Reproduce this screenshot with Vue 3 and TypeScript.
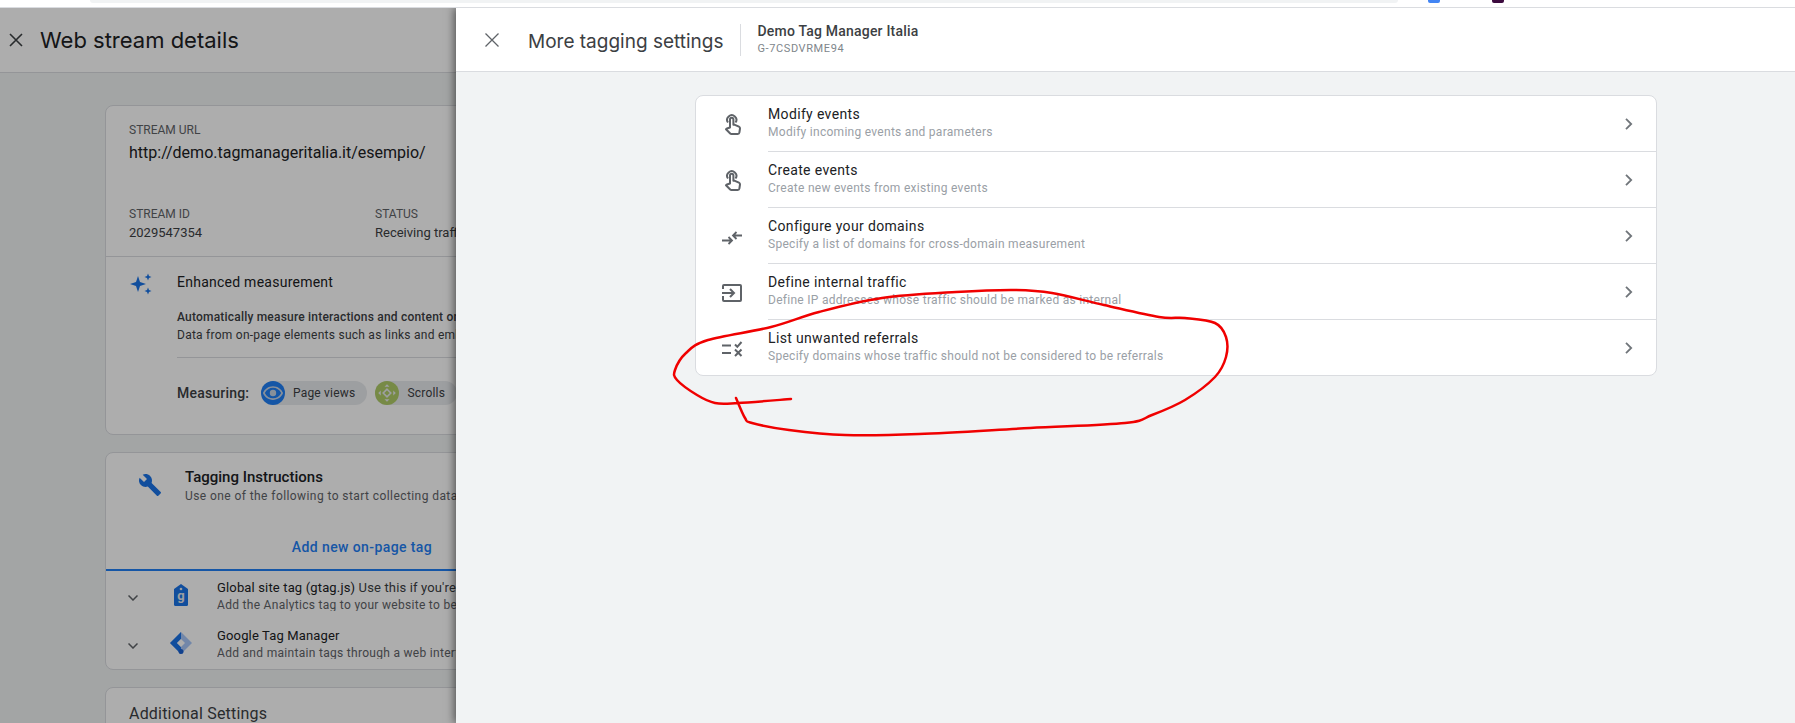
<script setup lang="ts">
type RowIcon = 'touch' | 'compare' | 'input' | 'rule'

const settings: { title: string; sub: string; icon: RowIcon }[] = [
  { title: 'Modify events', sub: 'Modify incoming events and parameters', icon: 'touch' },
  { title: 'Create events', sub: 'Create new events from existing events', icon: 'touch' },
  { title: 'Configure your domains', sub: 'Specify a list of domains for cross-domain measurement', icon: 'compare' },
  { title: 'Define internal traffic', sub: 'Define IP addresses whose traffic should be marked as internal', icon: 'input' },
  { title: 'List unwanted referrals', sub: 'Specify domains whose traffic should not be considered to be referrals', icon: 'rule' },
]

// hand-drawn circle, traced from the screenshot
const scribble: [number, number][] = [
  [791, 399], [738, 403], [715, 403], [697, 395], [677, 380], [675, 370], [686, 353], [708, 340],
  [771, 327], [819, 312], [882, 298], [956, 292], [1015, 290], [1052, 293], [1104, 305], [1159, 317],
  [1185, 318], [1215, 323], [1226, 337], [1226, 357], [1215, 377], [1185, 400], [1152, 415], [1125, 423],
  [1030, 428], [919, 434], [845, 435], [789, 430], [752, 423], [745, 418], [736, 398],
]

function smooth(pts: [number, number][]): string {
  let d = `M${pts[0][0]} ${pts[0][1]}`
  for (let i = 0; i < pts.length - 1; i++) {
    const p0 = pts[Math.max(i - 1, 0)]
    const p1 = pts[i]
    const p2 = pts[i + 1]
    const p3 = pts[Math.min(i + 2, pts.length - 1)]
    const c1x = p1[0] + (p2[0] - p0[0]) / 6
    const c1y = p1[1] + (p2[1] - p0[1]) / 6
    const c2x = p2[0] - (p3[0] - p1[0]) / 6
    const c2y = p2[1] - (p3[1] - p1[1]) / 6
    d += ` C${c1x} ${c1y} ${c2x} ${c2y} ${p2[0]} ${p2[1]}`
  }
  return d
}

const scribblePath = smooth(scribble)
</script>

<template>
  <div class="screen">
    <div class="browser-strip">
      <div class="omnibox"></div>
      <span class="fav fav-blue"></span>
      <span class="fav fav-purple"></span>
    </div>

    <div class="workspace">
      <section class="page">
        <header class="page-head">
          <svg class="close" viewBox="0 0 14 14" width="14" height="14">
            <path d="M1 1l12 12M13 1L1 13" stroke="#3c4043" stroke-width="1.6" fill="none" />
          </svg>
          <h1>Web stream details</h1>
        </header>

        <div class="card stream-card">
          <div class="stream-top">
            <div class="label">STREAM URL</div>
            <div class="url">http://demo.tagmanageritalia.it/esempio/</div>
            <div class="meta">
              <div>
                <div class="label">STREAM ID</div>
                <div class="value">2029547354</div>
              </div>
              <div>
                <div class="label">STATUS</div>
                <div class="value">Receiving traffic</div>
              </div>
            </div>
          </div>
          <div class="enhanced">
            <svg class="sparkle" viewBox="0 0 24 24" width="24" height="24">
              <path fill="#1a73e8" d="M9 4l2 6 6 2-6 2-2 6-2-6-6-2 6-2zM19 1.500l1 2.500 2.500 1-2.500 1-1 2.500-1-2.500-2.500-1 2.500-1zM19 15.500l1 2.500 2.500 1-2.500 1-1 2.500-1-2.500-2.500-1 2.500-1z" />
            </svg>
            <div class="enhanced-body">
              <div class="enhanced-title">Enhanced measurement</div>
              <p class="strong">Automatically measure interactions and content on your</p>
              <p>Data from on-page elements such as links and embedded</p>
              <div class="measuring">
                <span class="measuring-label">Measuring:</span>
                <span class="chip">
                  <span class="chip-icon blue">
                    <svg viewBox="0 0 24 24" width="22" height="22">
                      <path fill="#c8d4e4" fill-rule="evenodd" d="M12 4.500C7 4.500 2.730 7.610 1 12c1.730 4.390 6 7.500 11 7.500s9.270-3.110 11-7.500c-1.730-4.390-6-7.500-11-7.500zM12 17.800c-3.800 0-7.200-2.200-8.900-5.800C4.800 8.400 8.200 6.200 12 6.200s7.200 2.200 8.900 5.800c-1.700 3.600-5.100 5.800-8.900 5.800zM12 8.500a3.500 3.500 0 1 0 0 7 3.500 3.500 0 0 0 0-7z" />
                    </svg>
                  </span>
                  Page views
                </span>
                <span class="chip">
                  <span class="chip-icon green">
                    <svg viewBox="0 0 24 24" width="20" height="20">
                      <path fill="none" stroke="#e8eaed" stroke-width="2" d="M12 7.500l4.500 4.500-4.500 4.500L7.500 12z" />
                      <path fill="#e8eaed" d="M12 1.500l3 3H9zM12 22.500l-3-3h6zM1.500 12l3-3v6zM22.500 12l-3 3V9z" />
                    </svg>
                  </span>
                  Scrolls
                </span>
              </div>
            </div>
          </div>
        </div>

        <div class="card tagging-card">
          <div class="tagging-head">
            <svg viewBox="0 0 24 24" width="24" height="24">
              <path fill="#1a73e8" d="M22.700 19l-9.100-9.100c.9-2.300.4-5-1.500-6.900-2-2-5-2.400-7.400-1.300L9 6 6 9 1.600 4.700C.4 7.100.9 10.100 2.900 12.100c1.900 1.900 4.600 2.400 6.900 1.500l9.100 9.100c.4.4 1 .4 1.400 0l2.300-2.300c.5-.4.5-1.100.1-1.400z" />
            </svg>
            <div>
              <div class="tagging-title">Tagging Instructions</div>
              <div class="tagging-sub">Use one of the following to start collecting data</div>
            </div>
          </div>
          <div class="tab">Add new on-page tag</div>
          <div class="tag-row">
            <svg class="caret" viewBox="0 0 10 6" width="10" height="6">
              <path d="M.5.500L5 5 9.500.500" fill="none" stroke="#5f6368" stroke-width="1.500" />
            </svg>
            <span class="tag-icon">
              <svg viewBox="0 0 16 22" width="16" height="22">
                <path fill="#1a73e8" d="M8 0l7 5v15.500a1.500 1.500 0 0 1-1.500 1.500h-11A1.500 1.500 0 0 1 1 20.500V5z" />
                <circle cx="8" cy="5" r="1.300" fill="#e8eaed" />
                <text x="8" y="16" text-anchor="middle" class="tag-g">g</text>
              </svg>
            </span>
            <div class="tag-text">
              <div class="tag-title">Global site tag (gtag.js) <span>Use this if you're</span></div>
              <div class="tag-sub">Add the Analytics tag to your website to begin</div>
            </div>
          </div>
          <div class="tag-row">
            <svg class="caret" viewBox="0 0 10 6" width="10" height="6">
              <path d="M.5.500L5 5 9.500.500" fill="none" stroke="#5f6368" stroke-width="1.500" />
            </svg>
            <span class="tag-icon">
              <svg viewBox="0 0 24 24" width="24" height="24">
                <path fill="#a8c7fa" d="M12 1l11 11-11 11L1 12z" />
                <path fill="#1a73e8" d="M12 1L1 12l11 11v-7l-4-4 4-4z" />
                <path fill="#fff" d="M12 8l4 4-4 4-4-4z" />
                <circle cx="12" cy="20.500" r="2.500" fill="#1a60d0" />
              </svg>
            </span>
            <div class="tag-text">
              <div class="tag-title">Google Tag Manager</div>
              <div class="tag-sub">Add and maintain tags through a web interface</div>
            </div>
          </div>
        </div>

        <div class="card extra-card">Additional Settings</div>

        <div class="scrim"></div>
      </section>

      <section class="panel">
        <header class="panel-head">
          <svg class="panel-close" viewBox="0 0 14 14" width="14" height="14">
            <path d="M.5.500l13 13M13.500.500l-13 13" stroke="#5f6368" stroke-width="1.300" fill="none" />
          </svg>
          <h2>More tagging settings</h2>
          <div class="stream-name">
            <div class="stream-title">Demo Tag Manager Italia</div>
            <div class="stream-code">G-7CSDVRME94</div>
          </div>
        </header>

        <div class="settings">
          <div v-for="item in settings" :key="item.title" class="setting">
            <span class="setting-icon">
              <svg viewBox="0 0 24 24" width="24" height="24" fill="none" stroke="#5f6368" stroke-width="2">
                <template v-if="item.icon === 'touch'">
                  <path d="M8 10.500a4.600 4.600 0 1 1 7.500 0" />
                  <path stroke-linejoin="round" d="M10 15.500V7.500a1.700 1.700 0 0 1 3.400 0v5.300h1.500l4 1.900c.8.400 1.200 1 1.100 1.800l-.6 4c-.1.900-.8 1.500-1.700 1.500h-6.300c-.5 0-.9-.2-1.200-.5l-4.200-4.300.6-.6c.3-.3.7-.4 1.100-.3z" />
                </template>
                <path v-else-if="item.icon === 'compare'" stroke-width="1.800" d="M2 16.500h10M8.500 13l3.500 3.500L8.500 20M22 11.500h-9M16.500 8L13 11.500l3.500 3.500" />
                <template v-else-if="item.icon === 'input'">
                  <path d="M3 9V6a1 1 0 0 1 1-1h16a1 1 0 0 1 1 1v14a1 1 0 0 1-1 1H4a1 1 0 0 1-1-1v-4" />
                  <path d="M2 13h12M10 9l4 4-4 4" />
                </template>
                <template v-else>
                  <path d="M2 9.500h9M2 17h9" />
                  <path d="M15 8.500l2.300 2.300L21.500 6M15 13.500l6.500 6.500M21.500 13.500L15 20" />
                </template>
              </svg>
            </span>
            <div class="setting-body">
              <div class="setting-text">
                <div class="setting-title">{{ item.title }}</div>
                <div class="setting-sub">{{ item.sub }}</div>
              </div>
              <svg class="chevron" viewBox="0 0 8 12" width="8" height="12">
                <path d="M1 .8L6.200 6 1 11.200" fill="none" stroke="#70757a" stroke-width="1.800" />
              </svg>
            </div>
          </div>
        </div>
      </section>
    </div>

    <svg class="scribble" width="1795" height="723" viewBox="0 0 1795 723">
      <path :d="scribblePath" fill="none" stroke="#f00000" stroke-width="2.500" stroke-linecap="round" stroke-linejoin="round" />
    </svg>
  </div>
</template>

<style scoped>
.screen {
  position: relative;
  height: 100vh;
  display: flex;
  flex-direction: column;
  overflow: hidden;
  background: #fff;
  font-family: Roboto, "Liberation Sans", sans-serif;
  color: #202124;
}

.browser-strip {
  position: relative;
  z-index: 1;
  height: 8px;
  flex: none;
  background: #fff;
  border-bottom: 1px solid #dadce0;
  box-sizing: border-box;
}

.omnibox {
  position: absolute;
  left: 90px;
  top: 0;
  width: 1308px;
  height: 3px;
  background: #f1f3f4;
  border-radius: 0 0 12px 12px;
}

.fav {
  position: absolute;
  top: 0;
  width: 12px;
  height: 3px;
  border-radius: 0 0 2px 2px;
}

.fav-blue {
  left: 1428px;
  background: #4285f4;
}

.fav-purple {
  left: 1492px;
  background: #3c0a3e;
}

.workspace {
  flex: 1;
  display: flex;
  min-height: 0;
}

.page {
  position: relative;
  width: 456px;
  flex: none;
  overflow: hidden;
  background: #f1f3f4;
  white-space: nowrap;
}

.scrim {
  position: absolute;
  inset: 0;
  background: rgba(0, 0, 0, 0.32);
}

.page-head {
  height: 65px;
  box-sizing: border-box;
  display: flex;
  align-items: center;
  background: #fff;
  border-bottom: 1px solid #dadce0;
  padding-left: 9px;
}

.page-head h1 {
  margin: 0 0 0 17px;
  font-family: Inter, Roboto, sans-serif;
  font-size: 22px;
  font-weight: 400;
}

.card {
  width: 1000px;
  margin-left: 105px;
  box-sizing: border-box;
  background: #fff;
  border: 1px solid #dadce0;
  border-radius: 8px;
}

.stream-card {
  margin-top: 32px;
  height: 330px;
}

.stream-top {
  height: 151px;
  box-sizing: border-box;
  padding: 16px 23px 0;
  border-bottom: 1px solid #dadce0;
}

.label {
  font-size: 12px;
  line-height: 16px;
  color: #5f6368;
}

.url {
  margin-top: 3px;
  font-size: 16px;
  line-height: 24px;
  color: #202124;
}

.meta {
  display: grid;
  grid-template-columns: 246px 246px;
  margin-top: 41px;
}

.value {
  margin-top: 3px;
  font-size: 13px;
  line-height: 16px;
  color: #3c4043;
}

.enhanced {
  display: flex;
  padding: 15px 0 0 23px;
}

.sparkle {
  width: 24px;
  height: 24px;
  margin-right: 24px;
}

.enhanced-title {
  font-size: 14px;
  line-height: 20px;
  letter-spacing: 0.25px;
  color: #202124;
}

.enhanced-body p {
  margin: 0;
  font-size: 12px;
  line-height: 18px;
  letter-spacing: 0.25px;
  color: #3c4043;
}

.enhanced-body p.strong {
  margin-top: 16px;
  font-weight: 500;
  letter-spacing: 0.2px;
}

.measuring {
  display: flex;
  align-items: center;
  gap: 8px;
  margin-top: 13px;
  padding-top: 23px;
  border-top: 1px solid #dadce0;
}

.measuring-label {
  width: 72px;
  font-size: 14px;
  font-weight: 500;
  letter-spacing: 0.2px;
  color: #3c4043;
  margin-right: 4px;
}

.chip {
  display: flex;
  align-items: center;
  height: 24px;
  padding-right: 12px;
  border-radius: 12px;
  background: #e8eaed;
  font-size: 12px;
  letter-spacing: 0.2px;
  color: #3c4043;
}

.chip-icon {
  width: 24px;
  height: 24px;
  border-radius: 50%;
  margin-right: 8px;
  display: flex;
  align-items: center;
  justify-content: center;
}

.blue {
  background: #1f7ff5;
}

.green {
  background: #b0cc68;
}

.tagging-card {
  margin-top: 17px;
  height: 218px;
  overflow: hidden;
}

.tagging-head {
  display: flex;
  padding: 13px 0 0 32px;
  gap: 23px;
  align-items: center;
}

.tagging-title {
  font-size: 15px;
  line-height: 22px;
  font-weight: 500;
}

.tagging-sub {
  font-size: 12px;
  line-height: 16px;
  letter-spacing: 0.42px;
  color: #5f6368;
}

.tab {
  width: 512px;
  margin-top: 33px;
  padding-bottom: 12px;
  line-height: 20px;
  text-align: center;
  font-size: 14px;
  font-weight: 500;
  letter-spacing: 0.4px;
  color: #1f7ff5;
  border-bottom: 2px solid #1f7ff5;
}

.tag-row {
  position: relative;
  display: flex;
  height: 48px;
  padding-top: 7px;
  box-sizing: border-box;
}

.caret {
  position: absolute;
  left: 22px;
  top: 24px;
}

.tag-icon {
  position: absolute;
  left: 63px;
  top: 12px;
  width: 24px;
  height: 24px;
  display: flex;
  align-items: center;
  justify-content: center;
}

.tag-g {
  font-family: Roboto, sans-serif;
  font-size: 13px;
  font-weight: 700;
  fill: #e8eaed;
}

.tag-text {
  margin-left: 111px;
  height: 33px;
  overflow: hidden;
}

.tag-title {
  font-size: 13px;
  line-height: 19px;
  letter-spacing: 0.15px;
}

.tag-title span {
  color: #3c4043;
}

.tag-sub {
  font-size: 12px;
  line-height: 16px;
  letter-spacing: 0.3px;
  color: #5f6368;
}

.extra-card {
  margin-top: 17px;
  height: 100px;
  padding: 15px 0 0 23px;
  font-size: 16px;
  line-height: 22px;
  letter-spacing: 0.2px;
  color: #3c4043;
}

.panel {
  position: relative;
  flex: 1;
  background: #f1f3f4;
  box-shadow: -2px 0 8px rgba(0, 0, 0, 0.5);
}

.panel-head {
  height: 64px;
  box-sizing: border-box;
  display: flex;
  align-items: center;
  background: #fff;
  border-bottom: 1px solid #dadce0;
  padding-left: 29px;
}

.panel-head h2 {
  margin: 3px 16px 0 29px;
  font-family: Inter, Roboto, sans-serif;
  font-size: 19px;
  font-weight: 400;
  color: #3c4043;
}

.stream-name {
  height: 32px;
  padding-left: 17px;
  border-left: 1px solid #dadce0;
}

.stream-title {
  margin-top: -1px;
  font-size: 14px;
  line-height: 16px;
  letter-spacing: 0.2px;
  font-weight: 500;
  color: #3c4043;
}

.stream-code {
  margin-top: 3px;
  font-size: 11px;
  line-height: 14px;
  letter-spacing: 0.6px;
  color: #80868b;
}

.settings {
  width: 962px;
  margin: 23px 0 0 239px;
  box-sizing: border-box;
  background: #fff;
  border: 1px solid #dadce0;
  border-radius: 8px;
}

.setting {
  display: flex;
  height: 56px;
}

.setting:last-child {
  height: 55px;
}

.setting-icon {
  width: 72px;
  flex: none;
  display: flex;
  align-items: center;
  justify-content: center;
}

.setting-body {
  flex: 1;
  display: flex;
  align-items: center;
  justify-content: space-between;
  padding-right: 23px;
  border-bottom: 1px solid #dadce0;
}

.setting:last-child .setting-body {
  border-bottom: none;
}

.setting-text {
  margin-top: -3px;
}

.setting-title {
  font-size: 14px;
  line-height: 20px;
  letter-spacing: 0.35px;
  color: #202124;
}

.setting-sub {
  font-size: 12px;
  line-height: 16px;
  letter-spacing: 0.28px;
  color: #9aa0a6;
}

.scribble {
  position: absolute;
  z-index: 2;
  left: 0;
  top: 0;
  pointer-events: none;
}
</style>

<style>
body {
  margin: 0;
}
</style>
